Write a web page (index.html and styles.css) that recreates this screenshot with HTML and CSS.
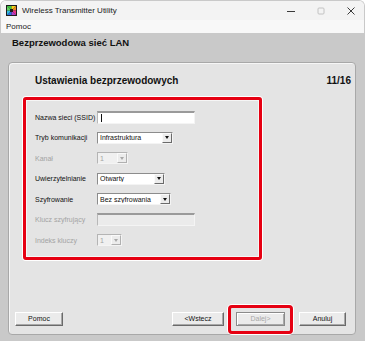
FILE: index.html
```html
<!DOCTYPE html>
<html lang="pl">
<head>
<meta charset="utf-8">
<link rel="stylesheet" href="styles.css">
</head>
<body>
<div class="win">
  <div class="titlebar">
    <svg class="appicon" width="11" height="11" viewBox="0 0 11 11">
      <rect width="11" height="11" fill="#1b1b1b"/>
      <polygon points="1,1 5.5,1 5.5,5.5" fill="#3cc83c"/>
      <polygon points="5.5,1 10,1 5.5,5.5" fill="#f2d21a"/>
      <polygon points="10,1 10,5.5 5.5,5.5" fill="#f08a1e"/>
      <polygon points="10,5.5 10,10 5.5,5.5" fill="#e8308c"/>
      <polygon points="10,10 5.5,10 5.5,5.5" fill="#b040c8"/>
      <polygon points="5.5,10 1,10 5.5,5.5" fill="#2a6ce0"/>
      <polygon points="1,10 1,5.5 5.5,5.5" fill="#30b8e0"/>
      <polygon points="1,5.5 1,1 5.5,5.5" fill="#60d060"/>
      <rect x="4" y="4" width="3" height="3" fill="#1b1b1b"/>
    </svg>
    <span class="title">Wireless Transmitter Utility</span>
    <div class="controls">
      <svg class="ctl" width="10" height="10" viewBox="0 0 10 10"><line x1="1" y1="5.5" x2="9" y2="5.5" stroke="#3a3a3a" stroke-width="1"/></svg>
      <svg class="ctl" width="10" height="10" viewBox="0 0 10 10"><rect x="2" y="2" width="6" height="6" rx="1" fill="none" stroke="#c2c2c2" stroke-width="1"/></svg>
      <svg class="ctl" width="10" height="10" viewBox="0 0 10 10"><path d="M1.5 1.5 L8.5 8.5 M8.5 1.5 L1.5 8.5" stroke="#3a3a3a" stroke-width="1"/></svg>
    </div>
  </div>
  <div class="menubar">Pomoc</div>
  <div class="main">
    <div class="header">Bezprzewodowa sieć LAN</div>
    <div class="panel">
      <div class="panel-head"><span>Ustawienia bezprzewodowych</span><span>11/16</span></div>
      <div class="redbox">
        <div class="row"><span class="lbl">Nazwa sieci (SSID)</span><div class="inp w98"><span class="caret"></span></div></div>
        <div class="row"><span class="lbl">Tryb komunikacji</span><div class="sel w76"><span class="val">Infrastruktura</span><span class="arr"></span></div></div>
        <div class="row dis"><span class="lbl">Kanał</span><div class="sel w31"><span class="val">1</span><span class="arr"></span></div></div>
        <div class="row"><span class="lbl">Uwierzytelnianie</span><div class="sel w68"><span class="val">Otwarty</span><span class="arr"></span></div></div>
        <div class="row"><span class="lbl">Szyfrowanie</span><div class="sel w74"><span class="val">Bez szyfrowania</span><span class="arr"></span></div></div>
        <div class="row dis"><span class="lbl">Klucz szyfrujący</span><div class="inp w98"></div></div>
        <div class="row dis"><span class="lbl">Indeks kluczy</span><div class="sel w25"><span class="val">1</span><span class="arr"></span></div></div>
      </div>
      <div class="buttons">
        <div class="btn b-pomoc">Pomoc</div>
        <div class="spacer"></div>
        <div class="btn b-back">&lt;Wstecz</div>
        <div class="btn b-next disabled">Dalej&gt;<span class="hl"></span></div>
        <div class="btn b-cancel">Anuluj</div>
      </div>
    </div>
  </div>
</div>
</body>
</html>
```
FILE: styles.css
```css
* { box-sizing: border-box; }
html, body { margin: 0; padding: 0; background: #ffffff; }
body { font-family: "Liberation Sans", Arial, sans-serif; color: #111; }

.win {
  width: 365px;
  height: 341px;
  display: flex;
  flex-direction: column;
  overflow: hidden;
  border-radius: 6px 6px 0 0;
  border: 1px solid #c9c9c9;
  border-bottom: none;
}

.titlebar {
  height: 19px;
  background: #f3f3f3;
  display: flex;
  align-items: center;
  padding-left: 5px;
}
.appicon { display: block; margin-right: 5px; }
.title { font-size: 8px; color: #1a1a1a; }
.controls { margin-left: auto; display: flex; align-items: center; }
.ctl { display: block; margin-left: 20px; }
.ctl:first-child { margin-left: 0; }
.controls { padding-right: 8px; }

.menubar {
  height: 13px;
  background: #f8f8f8;
  font-size: 8px;
  line-height: 13px;
  padding-left: 5px;
  color: #1a1a1a;
}

.main {
  flex: 1;
  background: #c9c9c9;
  display: flex;
  flex-direction: column;
  padding: 4px 8px 6px 7px;
}
.header {
  font-size: 9.5px;
  font-weight: bold;
  line-height: 12px;
  height: 12px;
  padding-left: 4px;
  margin-bottom: 13px;
  color: #111;
}

.panel {
  flex: 1;
  background: #e4e4e4;
  border: 1px solid #a8a8a8;
  border-radius: 4px;
  box-shadow: inset 1px 1px 0 #f6f6f6;
  display: flex;
  flex-direction: column;
}
.panel-head {
  display: flex;
  justify-content: space-between;
  padding: 12px 4px 0 26px;
  font-size: 10px;
  font-weight: bold;
  line-height: 12px;
  height: 24px;
  color: #111;
}

.redbox {
  margin: 10px 0 0 14px;
  width: 239px;
  height: 163px;
  border: 3px solid #e60012;
  border-radius: 3px;
  box-shadow: 0 0 0 1px #ffffff, inset 0 0 0 1px #f6f6f6;
  padding: 6.75px 0 0 9px;
}
.row {
  height: 20.5px;
  display: flex;
  align-items: center;
  font-size: 7px;
}
.lbl { width: 62px; flex: none; color: #111; }
.row.dis .lbl { color: #a3a3a3; }

.inp {
  height: 13px;
  background: #ffffff;
  border-top: 2px solid #9a9a9a;
  border-left: 1px solid #b8b8b8;
  border-right: 1px solid #f4f4f4;
  border-bottom: 1px solid #f4f4f4;
  position: relative;
  display: flex;
  align-items: center;
}
.caret { display: block; width: 1px; height: 8px; background: #111; margin-left: 3px; }
.row.dis .inp { background: #ebebeb; }

.sel {
  height: 12px;
  background: #ffffff;
  border-top: 1px solid #8c8c8c;
  border-left: 1px solid #8c8c8c;
  border-right: 1px solid #f4f4f4;
  border-bottom: 1px solid #f4f4f4;
  display: flex;
  align-items: center;
}
.val { flex: 1; padding-left: 2px; white-space: nowrap; overflow: hidden; font-size: 7px; color: #111; }
.arr {
  width: 10px;
  height: 10px;
  flex: none;
  background: #ececec;
  border-top: 1px solid #fafafa;
  border-left: 1px solid #fafafa;
  border-right: 1px solid #6a6a6a;
  border-bottom: 1px solid #6a6a6a;
  display: flex;
  align-items: center;
  justify-content: center;
}
.arr::after {
  content: "";
  display: block;
  border-left: 2.5px solid transparent;
  border-right: 2.5px solid transparent;
  border-top: 3px solid #111;
}
.row.dis .sel { background: #f0f0f0; border-top-color: #b4b4b4; border-left-color: #b4b4b4; }
.row.dis .val { color: #a3a3a3; }
.row.dis .arr { border-right-color: #b0b0b0; border-bottom-color: #b0b0b0; }
.row.dis .arr::after { border-top-color: #a8a8a8; }

.w98 { width: 98px; }
.w76 { width: 76px; }
.w31 { width: 31px; }
.w68 { width: 68px; }
.w74 { width: 74px; }
.w25 { width: 25px; }

.buttons {
  margin-top: auto;
  display: flex;
  align-items: center;
  padding: 0 9px 8px 6px;
}
.spacer { flex: 1; }
.btn {
  position: relative;
  height: 14px;
  font-size: 7px;
  line-height: 12px;
  text-align: center;
  background: #ebebeb;
  border-top: 1px solid #ffffff;
  border-left: 1px solid #ffffff;
  border-right: 1px solid #6a6a6a;
  border-bottom: 1px solid #6a6a6a;
  box-shadow: inset -1px -1px 0 #a8a8a8;
  color: #111;
}
.b-pomoc { width: 48px; }
.b-back { width: 52px; }
.b-next { width: 49px; margin-left: 12px; }
.b-cancel { width: 47px; margin-left: 14px; }
.btn.disabled {
  color: #a8a8a8;
  border: 1px solid #8a8a8a;
  box-shadow: inset 1px 1px 0 #ffffff, inset -1px -1px 0 #a8a8a8;
}
.hl {
  position: absolute;
  left: -9px;
  right: -9px;
  top: -8px;
  bottom: -9px;
  border: 3px solid #e60012;
  border-radius: 4px;
  box-shadow: 0 0 0 1px #ffffff;
}
```
